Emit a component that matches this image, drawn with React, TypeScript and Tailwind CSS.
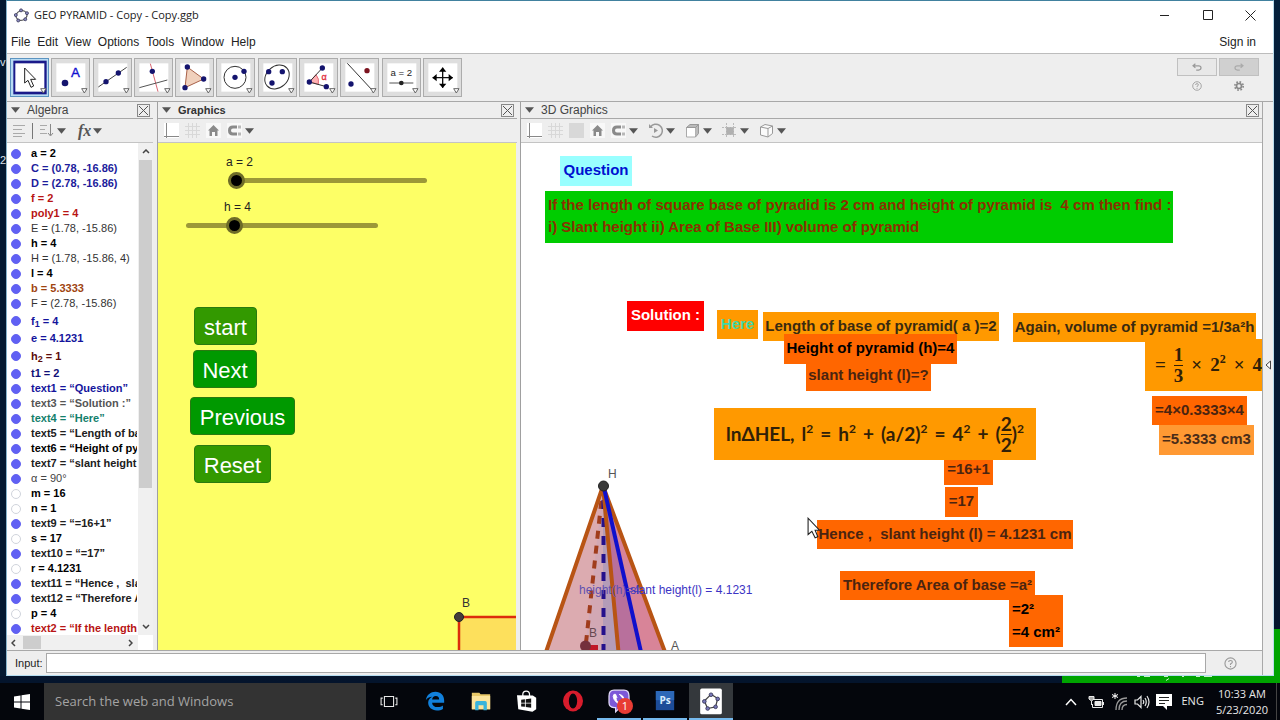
import { useState } from "react";
import type { ReactNode } from "react";

type AlgebraItem = {
  name: string;
  sub?: string;
  value: string;
  color: string;
  plain?: boolean;
};

const algebraItems: AlgebraItem[] = [
  { name: "a", value: "2", color: "text-black" },
  { name: "C", value: "(0.78, -16.86)", color: "text-[#1c1c9c]" },
  { name: "D", value: "(2.78, -16.86)", color: "text-[#1c1c9c]" },
  { name: "f", value: "2", color: "text-[#b81414]" },
  { name: "poly1", value: "4", color: "text-[#b81414]" },
  { name: "E", value: "(1.78, -15.86)", color: "text-[#333333]", plain: true },
  { name: "h", value: "4", color: "text-black" },
  { name: "H", value: "(1.78, -15.86, 4)", color: "text-[#333333]", plain: true },
  { name: "l", value: "4", color: "text-black" },
  { name: "b", value: "5.3333", color: "text-[#a04410]" },
  { name: "F", value: "(2.78, -15.86)", color: "text-[#333333]", plain: true },
  { name: "f", sub: "1", value: "4", color: "text-[#14149c]" },
  { name: "e", value: "4.1231", color: "text-[#14149c]" },
  { name: "h", sub: "2", value: "1", color: "text-[#5c0c0c]" },
  { name: "t1", value: "2", color: "text-[#101078]" },
  { name: "text1", value: "“Question”", color: "text-[#14149c]" },
  { name: "text3", value: "“Solution :”", color: "text-[#555555]" },
  { name: "text4", value: "“Here”", color: "text-[#14806c]" },
  { name: "text5", value: "“Length of base of pyramid( a )=2”", color: "text-[#202020]" },
  { name: "text6", value: "“Height of pyramid (h)=4”", color: "text-black" },
  { name: "text7", value: "“slant height (l)=?”", color: "text-[#202020]" },
  { name: "α", value: "90°", color: "text-[#444444]", plain: true },
  { name: "m", value: "16", color: "text-black" },
  { name: "n", value: "1", color: "text-black" },
  { name: "text9", value: "“=16+1”", color: "text-[#202020]" },
  { name: "s", value: "17", color: "text-black" },
  { name: "text10", value: "“=17”", color: "text-[#202020]" },
  { name: "r", value: "4.1231", color: "text-black" },
  { name: "text11", value: "“Hence ,  slant height”", color: "text-[#202020]" },
  { name: "text12", value: "“Therefore Area”", color: "text-[#202020]" },
  { name: "p", value: "4", color: "text-black" },
  { name: "text2", value: "“If the length of square”", color: "text-[#b81414]" },
];

const hiddenNames = ["m", "n", "s", "r", "p"];

const labels = [
  { text: "Question", box: "left-[39px] top-[13px] w-[72px] h-[30px] bg-[#99ffff] text-[#0010d0]" },
  { text: "Solution :", box: "left-[106px] top-[158px] w-[77px] h-[30px] bg-[#ff0000] text-white" },
  { text: "Here", box: "left-[196px] top-[167px] w-[41px] h-[29px] bg-[#ff9900] text-[#40d8a8]" },
  { text: "Length of base of pyramid( a )=2", box: "left-[242px] top-[169px] w-[236px] h-[29px] bg-[#ff9900] text-[#3a2a10]" },
  { text: "Height of pyramid (h)=4", box: "left-[263px] top-[191px] w-[173px] h-[30px] bg-[#ff6600] text-black" },
  { text: "slant height (l)=?", box: "left-[285px] top-[218px] w-[125px] h-[30px] bg-[#ff6600] text-[#4a2410]" },
  { text: "Again, volume of pyramid =1/3a²h", box: "left-[492px] top-[170px] w-[243px] h-[29px] bg-[#ff9900] text-[#3a2a10]" },
  { text: "=4×0.3333×4", box: "left-[631px] top-[253px] w-[95px] h-[29px] bg-[#ff6600] text-[#4a2410]" },
  { text: "=5.3333 cm3", box: "left-[638px] top-[282px] w-[95px] h-[30px] bg-[#ff9933] text-[#4a2c18]" },
  { text: "=16+1", box: "left-[423px] top-[312px] w-[49px] h-[30px] bg-[#ff6600] text-[#4a2410]" },
  { text: "=17", box: "left-[424px] top-[344px] w-[33px] h-[30px] bg-[#ff6600] text-[#4a2410]" },
  { text: "Hence ,  slant height (l) = 4.1231 cm", box: "left-[296px] top-[377px] w-[256px] h-[29px] bg-[#ff6600] text-[#4a2410]" },
  { text: "Therefore Area of base =a²", box: "left-[319px] top-[428px] w-[195px] h-[29px] bg-[#ff6600] text-[#4a2410]" },
];

function Dot({ x, y, r = 8, fill = "#14146e" }: { x: number; y: number; r?: number; fill?: string }) {
  return <circle cx={x} cy={y} r={r} fill={fill} />;
}

const tools: { name: string; icon: ReactNode }[] = [
  {
    name: "Move",
    icon: (
      <path d="M44 30V75L54 67L63 88L71 84L62 64H77Z" fill="#fff" stroke="#222" strokeWidth="3" />
    ),
  },
  {
    name: "Point",
    icon: (
      <>
        <Dot x={42} y={75} r={10} />
        <text x="73" y="57" fontSize="40" textAnchor="middle" fill="#1010d0" stroke="#1010d0">A</text>
      </>
    ),
  },
  {
    name: "Line",
    icon: (
      <>
        <path d="M16 87L101 28" stroke="#444" strokeWidth="3" />
        <Dot x={39} y={71} />
        <Dot x={76} y={45} />
      </>
    ),
  },
  {
    name: "Perpendicular Line",
    icon: (
      <>
        <path d="M49 17L72 101" stroke="#d86470" strokeWidth="3" />
        <path d="M16 89L100 66" stroke="#555" strokeWidth="3" />
        <Dot x={55} y={40} />
      </>
    ),
  },
  {
    name: "Polygon",
    icon: (
      <>
        <path d="M37 27L86 63L30 89Z" fill="#f0d0bc" stroke="#a86048" strokeWidth="3" />
        <Dot x={37} y={27} />
        <Dot x={86} y={63} />
        <Dot x={30} y={89} />
      </>
    ),
  },
  {
    name: "Circle with Center through Point",
    icon: (
      <>
        <circle cx="57" cy="58" r="33" fill="none" stroke="#333" strokeWidth="3" />
        <Dot x={57} y={58} />
        <Dot x={84} y={40} />
      </>
    ),
  },
  {
    name: "Ellipse",
    icon: (
      <>
        <ellipse cx="57" cy="57" rx="40" ry="32" transform="rotate(-42 57 57)" fill="none" stroke="#333" strokeWidth="3" />
        <Dot x={32} y={41} />
        <Dot x={73} y={41} />
        <Dot x={42} y={75} />
      </>
    ),
  },
  {
    name: "Angle",
    icon: (
      <>
        <path d="M31 72L51 50Q62 62 58 79Z" fill="#ffb0b4" stroke="#d84050" strokeWidth="2" />
        <path d="M70 30L31 72L82 86" fill="none" stroke="#333" strokeWidth="3" />
        <text x="75" y="67" fontSize="27" textAnchor="middle" fill="#e03040" stroke="#e03040">α</text>
        <Dot x={70} y={30} />
        <Dot x={31} y={72} />
        <Dot x={82} y={86} />
      </>
    ),
  },
  {
    name: "Reflect about Line",
    icon: (
      <>
        <path d="M22 16L98 98" stroke="#333" strokeWidth="3" />
        <Dot x={81} y={38} fill="#7c1420" />
        <Dot x={33} y={78} />
      </>
    ),
  },
  {
    name: "Slider",
    icon: (
      <>
        <text x="58" y="55" fontSize="29" textAnchor="middle" fill="#222">a = 2</text>
        <path d="M22 75H94" stroke="#555" strokeWidth="3" />
        <Dot x={58} y={75} r={7} fill="#222" />
      </>
    ),
  },
  {
    name: "Move Graphics View",
    icon: (
      <>
        <path d="M29 59H89M59 29V89" stroke="#111" strokeWidth="4" />
        <path d="M28 59L41 48V70ZM90 59L77 48V70ZM59 28L48 41H70ZM59 90L48 77H70Z" fill="#000" />
      </>
    ),
  },
];

function Caret({ className = "" }: { className?: string }) {
  return (
    <svg viewBox="0 0 10 6" className={`h-[6px] w-[9px] shrink-0 fill-[#555555] ${className}`}>
      <path d="M0 0H10L5 6Z" />
    </svg>
  );
}

const glyphs: Record<string, ReactNode> = {
  Axes: (
    <>
      <rect width="15" height="15" fill="#fff" />
      <path d="M2.5 0V15M0 13.5H15" stroke="#888" />
    </>
  ),
  Grid: <path d="M3.5 0V15M7.5 0V15M11.5 0V15M0 3.5H15M0 7.5H15M0 11.5H15" stroke="#d8d8d8" />,
  Plane: <rect width="15" height="15" fill="#d8d8d8" />,
  Home: (
    <>
      <rect width="15" height="15" fill="#f8f8f8" />
      <path d="M7.5 2L2 7.5H3.5V13H6V9H9V13H11.5V7.5H13Z" fill="#8a8a8a" />
    </>
  ),
  Capture: (
    <>
      <rect width="15" height="15" fill="#f8f8f8" />
      <path d="M10 4H6Q2.500 4 2.500 7.500T6 11H10" fill="none" stroke="#8a8a8a" strokeWidth="3" />
      <path d="M11 4H14M11 11H14" stroke="#b8b8b8" strokeWidth="3" />
    </>
  ),
  Rotate: (
    <>
      <path d="M2.500 4A6.500 6.500 0 1 1 4 13" fill="none" stroke="#999" strokeWidth="1.500" />
      <path d="M1 1V5H5M6 5V10L10 7.500Z" fill="#999" />
    </>
  ),
  View: (
    <>
      <path d="M1.500 4.500H10.500V14H1.500Z" fill="#fff" stroke="#aaa" />
      <path d="M1.500 4.500L5 1.500H13.500L10.500 4.500ZM10.500 4.500L13.500 1.500V10.500L10.500 14" fill="#bbb" stroke="#999" />
    </>
  ),
  Clipping: (
    <>
      <rect x="4" y="4" width="8" height="8" fill="#b0b0b0" />
      <path d="M4.500 0V15M11.500 0V15M0 4.500H15M0 11.500H15" stroke="#bbb" strokeDasharray="2 1" />
    </>
  ),
  Projection: (
    <path d="M1.500 4L6 1.500L13.500 3V10.500L9 14L1.500 12ZM1.500 4L9 5.500V14M9 5.500L13.500 3" fill="#fafafa" stroke="#999" />
  ),
  Auxiliary: <path d="M0 2.500H12M0 6.500H9M0 10.500H12M0 13.500H9" stroke="#aaa" />,
  Sort: (
    <>
      <path d="M1 2.500H8M1 6.500H6M1 10.500H8" stroke="#aaa" />
      <path d="M11.500 1V12M9 10L11.500 13L14 10" fill="none" stroke="#888" />
    </>
  ),
};

function StyleButton({ name, menu }: { name: string; menu?: boolean }) {
  return (
    <button type="button" aria-label={name} className="flex items-center gap-[3px]">
      <svg viewBox="0 0 15 15" className="h-[15px] w-[15px]">{glyphs[name]}</svg>
      {menu && <Caret />}
    </button>
  );
}

function PanelHeader({ title, active }: { title: string; active?: boolean }) {
  return (
    <div className="flex h-[17px] shrink-0 items-center gap-[7px] border-b border-[#a8a8a8] pr-[3px] pl-1">
      <Caret />
      <h2 className={active ? "text-[11px] font-bold text-[#333333]" : "text-[12px] text-[#444444]"}>
        {title}
      </h2>
      <button type="button" aria-label={`Close ${title}`} className="ml-auto h-[13px] w-[13px] border border-[#888888]">
        <svg viewBox="0 0 11 11" className="h-[11px] w-[11px]">
          <path d="M1 1L10 10M10 1L1 10" stroke="#555" />
        </svg>
      </button>
    </div>
  );
}

function HelpGlyph({ small }: { small?: boolean }) {
  return (
    <svg viewBox="0 0 14 14" className={small ? "h-[10px] w-[10px]" : "h-[13px] w-[13px]"} fill="none" stroke="#999" strokeWidth="1.200">
      <circle cx="7" cy="7" r="6" />
      <path d="M5 5.500Q5 3.700 7 3.700T9 5.500Q9 6.500 7 7.500V8.500M7 9.700V11" />
    </svg>
  );
}

function Toolbar() {
  const [selected, setSelected] = useState("Move");
  return (
    <div className="flex h-12 shrink-0 items-start border-t border-[#bcbcbc] bg-[#eeeeee] pt-1 pl-[3px]">
      <div className="flex w-[452px] justify-between">
        {tools.map((tool) => (
          <button
            key={tool.name}
            type="button"
            aria-label={tool.name}
            onClick={() => setSelected(tool.name)}
            className={`h-[39px] w-[39px] border ${
              selected === tool.name ? "border-[#5c94c0] bg-[#b8dcf4]" : "border-[#acacac] bg-[#dedede]"
            }`}
          >
            <svg viewBox="3 3 111 111" className="h-[37px] w-[37px]" fontFamily="Liberation Sans, sans-serif">
              {selected === tool.name && <rect x="10" y="8" width="100" height="101" fill="#1a1a8a" />}
              <rect x="16" y="16" width="87" height="85" fill="#fff" />
              {tool.icon}
              <path d="M92 92H108L100 105Z" fill="#fff" stroke="#666" strokeWidth="3" />
            </svg>
          </button>
        ))}
      </div>
      <div className="mr-[14px] ml-auto grid grid-cols-2 gap-x-[2px] gap-y-[3px]">
        <button type="button" aria-label="Undo" className="flex h-[18px] w-10 items-center justify-center border border-[#c0c0c0] bg-[#e8e8e8]">
          <svg viewBox="0 0 12 10" className="h-2 w-[10px]" fill="none" stroke="#999" strokeWidth="1.500">
            <path d="M4 1L1 3.500L4 6M1 3.500H8Q11 3.500 11 6T8 9H5" />
          </svg>
        </button>
        <button type="button" aria-label="Redo" className="flex h-[18px] w-10 items-center justify-center border border-[#c0c0c0] bg-[#d0d0d0]">
          <svg viewBox="0 0 12 10" className="h-2 w-[10px]" fill="none" stroke="#aaa" strokeWidth="1.500">
            <path d="M8 1L11 3.500L8 6M11 3.500H4Q1 3.500 1 6T4 9H7" />
          </svg>
        </button>
        <button type="button" aria-label="Help" className="flex justify-center pt-[2px]">
          <HelpGlyph small />
        </button>
        <button type="button" aria-label="Preferences" className="flex justify-center pt-[2px]">
          <svg viewBox="0 0 12 12" className="h-[10px] w-[10px]" fill="none" stroke="#888">
            <circle cx="6" cy="6" r="3" strokeWidth="2" />
            <circle cx="6" cy="6" r="5" strokeWidth="2" strokeDasharray="2 1.930" />
          </svg>
        </button>
      </div>
    </div>
  );
}

function AlgebraPanel() {
  const [hidden, setHidden] = useState<string[]>(hiddenNames);

  const toggle = (name: string) =>
    setHidden((prev) => (prev.includes(name) ? prev.filter((n) => n !== name) : [...prev, name]));

  return (
    <section className="flex w-[146px] shrink-0 flex-col">
      <PanelHeader title="Algebra" />
      <div className="flex h-6 shrink-0 items-center border-b border-[#c4c4c4] pl-[6px]">
        <StyleButton name="Auxiliary" />
        <span className="mr-[6px] ml-1 h-4 w-px bg-[#777777]" />
        <StyleButton name="Sort" menu />
        <button type="button" aria-label="Function" className="ml-3 flex items-center gap-[2px] font-['Liberation_Serif',serif] text-[16px] leading-4 font-bold text-[#555555] italic">
          fx
          <Caret />
        </button>
      </div>
      <div className="flex min-h-0 flex-1 bg-white">
        <ul className="mr-px min-w-0 flex-1 overflow-hidden pt-[3px] pl-1">
          {algebraItems.map((item) => {
            const key = item.name + (item.sub ?? "");
            return (
              <li key={key} className={`flex items-center ${item.sub ? "h-5" : "h-[15px]"}`}>
                <input
                  type="checkbox"
                  aria-label={`Show ${key}`}
                  checked={!hidden.includes(key)}
                  onChange={() => toggle(key)}
                  className="h-[10px] w-[10px] shrink-0 appearance-none rounded-full border border-[#d0d4dc] bg-white checked:border-[#6464f0] checked:bg-[#6060f4]"
                />
                <span className={`ml-[10px] text-[11px] leading-[15px] whitespace-pre ${item.plain ? "" : "font-bold"} ${item.color}`}>
                  {item.name}
                  {item.sub && <sub className="text-[9px]">{item.sub}</sub>}
                  {" = "}
                  {item.value}
                </span>
              </li>
            );
          })}
        </ul>
        <div className="flex w-[15px] shrink-0 flex-col items-center bg-[#f0f0f0]">
          <svg viewBox="0 0 8 5" className="my-[6px] h-[5px] w-2 shrink-0" fill="none" stroke="#444" strokeWidth="1.500">
            <path d="M1 4L4 1L7 4" />
          </svg>
          <div className="h-2/3 w-[13px] bg-[#cdcdcd]" />
          <svg viewBox="0 0 8 5" className="mt-auto mb-[6px] h-[5px] w-2 shrink-0" fill="none" stroke="#444" strokeWidth="1.500">
            <path d="M1 1L4 4L7 1" />
          </svg>
        </div>
      </div>
      <div className="flex h-[15px] shrink-0 bg-white">
        <div className="flex flex-1 items-center bg-[#f0f0f0] pr-[5px] pl-1">
          <svg viewBox="0 0 5 8" className="h-2 w-[5px]" fill="none" stroke="#444" strokeWidth="1.500">
            <path d="M4 1L1 4L4 7" />
          </svg>
          <div className="ml-[7px] h-[13px] w-[18px] bg-[#cdcdcd]" />
          <svg viewBox="0 0 5 8" className="ml-auto h-2 w-[5px]" fill="none" stroke="#444" strokeWidth="1.500">
            <path d="M1 1L4 4L1 7" />
          </svg>
        </div>
        <div className="w-[15px]" />
      </div>
    </section>
  );
}

const rangeClass =
  "absolute h-[17px] appearance-none bg-transparent [&::-webkit-slider-runnable-track]:h-[5px] [&::-webkit-slider-runnable-track]:rounded-full [&::-webkit-slider-runnable-track]:bg-[#9c9838] [&::-webkit-slider-thumb]:-mt-[6px] [&::-webkit-slider-thumb]:h-[17px] [&::-webkit-slider-thumb]:w-[17px] [&::-webkit-slider-thumb]:appearance-none [&::-webkit-slider-thumb]:rounded-full [&::-webkit-slider-thumb]:border-[3px] [&::-webkit-slider-thumb]:border-[#6e6c28] [&::-webkit-slider-thumb]:bg-black";

const greenButton =
  "absolute rounded-[4px] border border-[#2a7a10] pt-[3px] text-[22px] leading-8 text-white";

function GraphicsPanel() {
  const [a, setA] = useState(2);
  const [h, setH] = useState(4);

  return (
    <section className="flex w-[360px] shrink-0 flex-col border-l border-[#a0a0a0]">
      <PanelHeader title="Graphics" active />
      <div className="flex h-6 shrink-0 items-center gap-[6px] border-b border-[#c4c4c4] pl-[6px]">
        <StyleButton name="Axes" />
        <StyleButton name="Grid" />
        <StyleButton name="Home" />
        <StyleButton name="Capture" menu />
      </div>
      <div className="relative mr-px min-h-0 flex-1 overflow-hidden bg-[#fdff66]">
        <label htmlFor="slider-a" className="absolute top-[11px] left-[68px] text-[12px] leading-4 text-[#222222]">
          a = {a}
        </label>
        <input id="slider-a" type="range" min={2} max={10} value={a} onChange={(e) => setA(Number(e.target.value))} className={`top-[29px] left-[70px] w-[199px] ${rangeClass}`} />
        <label htmlFor="slider-h" className="absolute top-[56px] left-[66px] text-[12px] leading-4 text-[#222222]">
          h = {h}
        </label>
        <input id="slider-h" type="range" min={1} max={14} value={h} onChange={(e) => setH(Number(e.target.value))} className={`top-[74px] left-[28px] w-[192px] ${rangeClass}`} />

        <button type="button" className={`top-[164px] left-[36px] h-[38px] w-[63px] bg-[#339900] ${greenButton}`}>start</button>
        <button type="button" className={`top-[207px] left-[35px] h-[38px] w-[64px] bg-[#009900] ${greenButton}`}>Next</button>
        <button type="button" className={`top-[254px] left-[32px] h-[38px] w-[105px] bg-[#009900] ${greenButton}`}>Previous</button>
        <button type="button" className={`top-[302px] left-[36px] h-[38px] w-[77px] bg-[#339900] ${greenButton}`}>Reset</button>

        <svg viewBox="0 0 70 56" className="absolute top-[452px] left-[289px] h-[56px] w-[70px]" fontFamily="Liberation Sans, sans-serif">
          <path d="M12 22H70V56H12Z" fill="#fde05c" />
          <path d="M70 22H12V56" fill="none" stroke="#dc2c0c" strokeWidth="2.500" />
          <circle cx="12" cy="22" r="4.500" fill="#443c3c" stroke="#222" />
          <text x="15" y="12" fontSize="12" fill="#333">B</text>
        </svg>
      </div>
    </section>
  );
}

function Fraction({ top, bottom }: { top: string; bottom: string }) {
  return (
    <span className="flex flex-col items-center leading-5">
      <span className="border-b border-current">{top}</span>
      <span>{bottom}</span>
    </span>
  );
}

function Power({ base, exp = "2" }: { base: string; exp?: string }) {
  return (
    <span>
      {base}
      <sup className="-top-2 text-[12px]">{exp}</sup>
    </span>
  );
}

function Pyramid() {
  return (
    <svg viewBox="541 465 150 185" className="absolute top-[322px] left-5 h-[185px] w-[150px]" fontFamily="Liberation Sans, sans-serif">
      <path d="M603 486L546 652H620Z" fill="#dcabb0" />
      <path d="M603 486L585 652H604Z" fill="#d2a8b4" />
      <path d="M603 486V652H620Z" fill="#b49cb8" />
      <path d="M603 486L619 652H641Z" fill="#b8709c" />
      <path d="M603 486L640 652H666Z" fill="#d88498" />
      <path d="M603 486L585 652" stroke="#a03c1c" strokeWidth="4" strokeDasharray="8 7" />
      <path d="M603.500 500V652" stroke="#24108c" strokeWidth="4" strokeDasharray="9 9" />
      <path d="M603 486L546 652M603 486L618.500 652M603 486L665 652" fill="none" stroke="#b85414" strokeWidth="4" />
      <path d="M604 488L641 652" stroke="#1010cc" strokeWidth="4" />
      <path d="M586 645H598V652H590Z" fill="#c01828" />
      <circle cx="585.500" cy="646" r="5.500" fill="#74303c" />
      <circle cx="603.500" cy="486" r="5" fill="#3a3a3a" stroke="#222" />
      <text x="608" y="478" fontSize="12" fill="#555">H</text>
      <text x="589" y="637" fontSize="12" fill="#664850">B</text>
      <text x="671" y="650" fontSize="12" fill="#555">A</text>
    </svg>
  );
}

function Graphics3DPanel() {
  return (
    <section className="ml-[3px] flex min-w-0 flex-1 flex-col border-l border-[#a0a0a0]">
      <PanelHeader title="3D Graphics" />
      <div className="flex h-6 shrink-0 items-center gap-[6px] border-b border-[#c4c4c4] pl-[6px]">
        <StyleButton name="Axes" />
        <StyleButton name="Grid" />
        <StyleButton name="Plane" />
        <StyleButton name="Home" />
        <div className="flex gap-[10px]">
          <StyleButton name="Capture" menu />
          <StyleButton name="Rotate" menu />
          <StyleButton name="View" menu />
          <StyleButton name="Clipping" menu />
          <StyleButton name="Projection" menu />
        </div>
      </div>
      <div className="relative min-h-0 flex-1 overflow-hidden bg-white">
        <Pyramid />
        <span className="absolute top-[439px] left-[58px] text-[12px] leading-4 text-[#6050b0]">height(h)=4</span>
        <span className="absolute top-[439px] left-[109px] text-[12px] leading-4 whitespace-nowrap text-[#3c34c4]">slant height(l) = 4.1231</span>

        {labels.map((label) => (
          <div key={label.text} className={`absolute flex justify-center pt-[3px] text-[15px] leading-[21px] font-bold whitespace-pre ${label.box}`}>
            {label.text}
          </div>
        ))}

        <p className="absolute top-12 left-6 h-[52px] w-[628px] bg-[#00cc00] pt-[3px] pl-[3px] text-[15px] leading-[22px] font-bold whitespace-pre text-[#8c3000]">
          {"If the length of square base of pyradid is 2 cm and height of pyramid is  4 cm then find :\ni) Slant height ii) Area of Base III) volume of pyramid"}
        </p>
        <p className="absolute top-[452px] left-[488px] h-[52px] w-[54px] bg-[#ff6600] pt-[2px] pl-[3px] text-[15px] leading-[23px] font-bold whitespace-pre text-black">
          {"=2²\n=4 cm²"}
        </p>

        <div className="absolute top-[265px] left-[193px] flex h-[52px] w-[322px] items-center justify-center gap-[7px] bg-[#ff9900] font-['Lato',sans-serif] text-[19px] font-bold text-[#302008]">
          <span>lnΔHEL,</span>
          <Power base="l" />
          <span>=</span>
          <Power base="h" />
          <span>+</span>
          <Power base="(a/2)" />
          <span>=</span>
          <Power base="4" />
          <span>+</span>
          <span className="flex items-center">
            (<Fraction top="2" bottom="2" />
            <Power base=")" />
          </span>
        </div>
        <div className="absolute top-[196px] left-[624px] flex h-[52px] w-[118px] items-center justify-end gap-2 bg-[#ff9900] pr-px font-['Liberation_Serif',serif] text-[19px] font-bold text-[#302008]">
          <span>=</span>
          <Fraction top="1" bottom="3" />
          <span>×</span>
          <Power base="2" />
          <span>×</span>
          <span>4</span>
        </div>

        <svg viewBox="0 0 12 20" className="absolute top-[374px] left-[286px] h-[22px] w-[13px]">
          <path d="M1 1V16L4.500 13L7.500 19L10 18L7.500 12H11.500Z" fill="#fff" stroke="#222" />
        </svg>
      </div>
    </section>
  );
}

function GeoGebraLogo() {
  return (
    <svg viewBox="0 0 16 16" className="h-[15px] w-[15px]">
      <ellipse cx="8" cy="8" rx="6" ry="5" transform="rotate(-20 8 8)" fill="none" stroke="#555" strokeWidth="1.200" />
      <g fill="#8c8cc0" stroke="#333355" strokeWidth=".8">
        <circle cx="7.500" cy="2.500" r="1.600" />
        <circle cx="13.800" cy="5.500" r="1.600" />
        <circle cx="12" cy="12" r="1.600" />
        <circle cx="4.500" cy="13.300" r="1.600" />
        <circle cx="1.900" cy="7.500" r="1.600" />
      </g>
    </svg>
  );
}

function AppWindow() {
  return (
    <main className="flex min-w-0 flex-1 flex-col border border-t-[#41819f] border-r-[#b8dcec] border-b-[#b4dcf0] border-l-[#88b4cc] bg-[#eeeeee]">
      <header className="flex h-[29px] shrink-0 items-center bg-white pl-[7px]">
        <GeoGebraLogo />
        <h1 className="ml-[5px] font-['Open_Sans',sans-serif] text-[11px] text-[#222222]">GEO PYRAMID - Copy - Copy.ggb</h1>
        <div className="mr-[17px] ml-auto flex gap-8">
          <button type="button" aria-label="Minimize">
            <svg viewBox="0 0 11 11" className="h-[11px] w-[11px]" stroke="#222"><path d="M1 5.500H10" /></svg>
          </button>
          <button type="button" aria-label="Maximize">
            <svg viewBox="0 0 11 11" className="h-[11px] w-[11px]" stroke="#222" fill="none"><path d="M1.500 .5H10.500V9.500H1.500Z" /></svg>
          </button>
          <button type="button" aria-label="Close">
            <svg viewBox="0 0 11 11" className="h-[11px] w-[11px]" stroke="#222"><path d="M.5 .5L10.500 10.500M10.500 .5L.5 10.500" /></svg>
          </button>
        </div>
      </header>
      <nav className="flex h-[23px] shrink-0 items-center gap-[7px] bg-white pl-1 text-[12px] text-[#222222]">
        {["File", "Edit", "View", "Options", "Tools", "Window", "Help"].map((item) => (
          <button key={item} type="button">{item}</button>
        ))}
        <button type="button" className="mr-[17px] ml-auto">Sign in</button>
      </nav>
      <Toolbar />
      <div className="flex min-h-0 flex-1 border-t border-[#a8a8a8]">
        <div className="flex min-w-0 flex-1 flex-col">
          <div className="flex min-h-0 flex-1">
            <AlgebraPanel />
            <div className="w-1" />
            <GraphicsPanel />
            <Graphics3DPanel />
          </div>
          <div className="flex h-[25px] shrink-0 items-center border-t border-[#a8a8a8] pl-2">
            <label htmlFor="command" className="w-[31px] text-[11px] text-[#222222]">Input:</label>
            <input id="command" type="text" className="h-5 min-w-0 flex-1 border border-[#a8a8a8] bg-white px-1 text-[12px]" />
            <button type="button" aria-label="Input help" className="flex w-14 justify-center pr-2">
              <HelpGlyph />
            </button>
          </div>
        </div>
        <button type="button" aria-label="Open sidebar" className="flex w-[11px] shrink-0 items-start justify-center border-l border-[#a8a8a8] pt-[258px]">
          <svg viewBox="0 0 6 10" className="h-[10px] w-[6px]" fill="#fff" stroke="#444"><path d="M5.500 1V9L1 5Z" /></svg>
        </button>
      </div>
    </main>
  );
}

const taskbarApps: { name: string; state?: string; icon: ReactNode }[] = [
  {
    name: "Task View",
    icon: (
      <path d="M6.500 6.500H17.500V18.500H6.500ZM4.500 8.500H2.500V16.500H4.500M19.500 8.500H21.500V16.500H19.500" fill="none" stroke="#e8e8e8" strokeWidth="1.300" />
    ),
  },
  {
    name: "Edge",
    icon: (
      <path d="M1 11C2 4.500 7 1 12.500 1C19 1 23 5.500 23 11.500V14H8.500C8.800 17.500 11.500 19.300 15 19.300C17.800 19.300 20 18.400 21.500 17.300V21.500C19.500 22.700 17 23.300 14.200 23.300C8 23.300 3.800 19.500 3.800 14.200C3.800 11 5.800 8.500 8.700 7C5 7.200 2.500 8.800 1 11ZM8.600 10.200H17C17 7.500 15.700 6 13 6S8.900 7.500 8.600 10.200Z" fill="#1180dc" fillRule="evenodd" />
    ),
  },
  {
    name: "File Explorer",
    icon: (
      <>
        <path d="M1 2H10L11.500 4H23V22H1Z" fill="#e8c868" />
        <path d="M1 6H23V22H1Z" fill="#fce49c" />
        <path d="M5 23V14Q5 12 7 12H17Q19 12 19 14V23H15V17H9V23Z" fill="#38b4dc" />
      </>
    ),
  },
  {
    name: "Store",
    icon: (
      <>
        <path d="M7 6V4Q7 0 11 0T15 4V6" fill="none" stroke="#fff" strokeWidth="1.500" />
        <path d="M0 5L19 5.500L23 8V22L18.500 25L1.500 22Z" fill="#fff" />
        <path d="M5 10.500L9.500 10V14H5ZM10.500 9.800L17 9V14H10.500ZM5 15H9.500V19L5 18.500ZM10.500 15H17V20L10.500 19.200Z" fill="#111" />
      </>
    ),
  },
  {
    name: "Opera",
    icon: (
      <>
        <ellipse cx="12" cy="12" rx="12" ry="12.500" fill="#d81c2c" />
        <ellipse cx="12" cy="12" rx="5" ry="9" fill="#04060c" />
      </>
    ),
  },
  {
    name: "Viber",
    state: "border-[#76b9ed]",
    icon: (
      <>
        <path d="M6 -1H18Q24 -1 24 6V14Q24 20 18 20H13L8 25V20H6Q0 19 0 14V6Q0 -1 6 -1Z" fill="#7c58d8" stroke="#e4dcfc" strokeWidth="1.500" />
        <path d="M6 4Q4 6 6 10T14 17Q16 16 15 14.500L13 13L11.500 14Q8.500 12 8.500 9L9.500 8L8 4ZM12 4Q18 5 18 11" fill="#fff" stroke="#fff" />
      </>
    ),
  },
  {
    name: "Photoshop",
    state: "border-[#76b9ed]",
    icon: (
      <>
        <path d="M1 0H23V23H1Z" fill="#1c4c98" />
        <path d="M1 0H23V11H1Z" fill="#2c68b8" />
        <text x="12" y="16" fontSize="12" fontWeight="bold" textAnchor="middle" fill="#d8ecfc">Ps</text>
      </>
    ),
  },
  {
    name: "GeoGebra",
    state: "border-[#76b9ed] bg-[#34383c]",
    icon: (
      <>
        <rect x="-1" y="-3" width="26" height="31" rx="2" fill="#fff" />
        <path d="M4 12L12 4L20 9L17.500 19L8 21Z" fill="none" stroke="#444" strokeLinejoin="round" strokeWidth="1.500" />
        <g fill="#7878b8" stroke="#333355">
          <circle cx="12" cy="4.500" r="2.200" />
          <circle cx="20" cy="9.500" r="2.200" />
          <circle cx="17.500" cy="19" r="2.200" />
          <circle cx="8" cy="21" r="2.200" />
          <circle cx="4" cy="12.500" r="2.200" />
        </g>
      </>
    ),
  },
];

function Taskbar() {
  return (
    <footer className="flex h-[37px] shrink-0 items-stretch bg-[#04060c] font-['Open_Sans',sans-serif] text-[#e8e8e8]">
      <button type="button" aria-label="Start" className="flex w-11 items-center justify-center">
        <svg viewBox="0 0 16 16" className="h-4 w-4" fill="#fff">
          <path d="M0 2.500L6.500 1.500V7.500H0ZM7.500 1.300L16 0V7.500H7.500ZM0 8.500H6.500V14.500L0 13.500ZM7.500 8.500H16V16L7.500 14.700Z" />
        </svg>
      </button>
      <input
        type="text"
        aria-label="Search"
        placeholder="Search the web and Windows"
        className="w-[322px] bg-[#333333] px-[11px] text-[13px] placeholder:text-[#a4a4a4]"
      />
      <div className="ml-px flex gap-[2px]">
        {taskbarApps.map((app) => (
          <button
            key={app.name}
            type="button"
            aria-label={app.name}
            className={`relative flex w-11 items-center justify-center border-b-2 pt-px ${app.state ?? "border-transparent"}`}
          >
            <svg viewBox="0 0 24 24" className="h-5 w-5 overflow-visible">{app.icon}</svg>
            {app.name === "Viber" && (
              <span className="absolute top-[15px] left-[20px] h-4 w-4 rounded-full bg-[#e83c34] text-center text-[11px] leading-4 text-white">1</span>
            )}
          </button>
        ))}
      </div>
      <div className="ml-auto flex items-center">
        <button type="button" aria-label="Show hidden icons" className="mr-[11px]">
          <svg viewBox="0 0 12 8" className="h-2 w-3" fill="none" stroke="#fff" strokeWidth="1.500"><path d="M1 7L6 1.500L11 7" /></svg>
        </button>
        <svg viewBox="0 0 16 14" className="mr-2 h-[14px] w-4" fill="none" stroke="#e8e8e8">
          <path d="M4.500 4.500H14.500V12.500H4.500V9M15.500 7V10" />
          <path d="M7 6.500H13V10.500H7Z" fill="#e8e8e8" />
          <path d="M1 1.500H6V4L3.500 6L1 4ZM3.500 6V10" fill="#aaa" />
        </svg>
        <svg viewBox="0 0 16 18" className="mr-[6px] h-[18px] w-4" fill="none" stroke="#999">
          <path d="M4 17Q4 5 15 5M7 17Q7 8 15 8M10 17Q10 11.500 15 11.500" strokeWidth="1.300" />
          <path d="M3 0V6M0 1.500L6 4.500M6 1.500L0 4.500" stroke="#fff" />
        </svg>
        <svg viewBox="0 0 16 14" className="mr-[6px] h-[14px] w-4" fill="none" stroke="#e8e8e8" strokeWidth="1.200">
          <path d="M1 5H3.500L7 1.500V12.500L3.500 9H1ZM9 5Q10.500 7 9 9M11 3Q13.500 7 11 11M13 1Q17 7 13 13" />
        </svg>
        <svg viewBox="0 0 16 16" className="mr-[9px] h-4 w-4">
          <path d="M0 0H16V12H11V16L7 12H0Z" fill="#fff" />
          <path d="M3 3.500H13M3 6.500H13M3 9.500H9" stroke="#222" />
        </svg>
        <span className="mr-3 text-[11px]">ENG</span>
        <div className="text-center text-[11px] leading-4 whitespace-nowrap">
          <p>10:33 AM</p>
          <p>5/23/2020</p>
        </div>
        <div className="mr-[3px] ml-2 h-[37px] w-px bg-[#444444]" />
      </div>
    </footer>
  );
}

export default function App() {
  return (
    <div className="flex h-screen flex-col overflow-hidden font-['Liberation_Sans',sans-serif]">
      <div className="relative flex min-h-0 flex-1 bg-linear-to-b from-[#04203c] to-[#04142c] pr-[6px] pb-[7px]">
        <div className="absolute right-0 bottom-0 h-[54px] w-[218px] bg-[#00a400]">
          <svg viewBox="0 0 80 8" className="absolute bottom-0 left-[74px] h-2 w-20" stroke="#c8f0c8" fill="none">
            <path d="M1 1.500H4M8 1.500H14M28 1.500H32M30 5.500L33 3.500M46 1.500H48M60 1.500H64M68 1.500H76" />
          </svg>
        </div>
        <div className="w-[6px] shrink-0 overflow-hidden bg-[#041830] pt-[54px] text-[11px] leading-4 text-[#d8e0e8]">
          <p>v</p>
          <p className="pt-[82px]">2</p>
        </div>
        <div className="relative flex min-w-0 flex-1">
          <AppWindow />
        </div>
      </div>
      <Taskbar />
    </div>
  );
}
